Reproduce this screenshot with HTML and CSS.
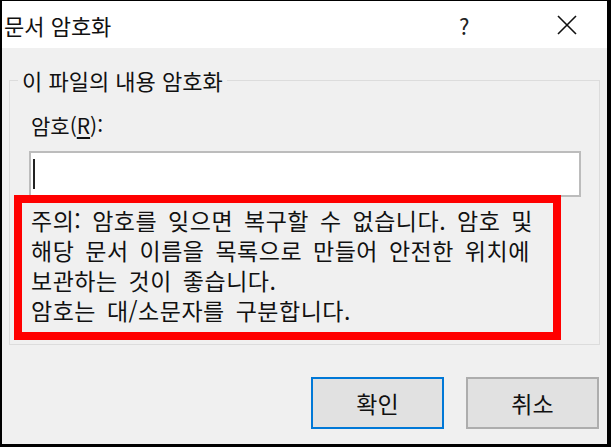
FILE: index.html
```html
<!DOCTYPE html>
<html lang="ko">
<head>
<meta charset="utf-8">
<title>문서 암호화</title>
<link rel="stylesheet" href="styles.css">
</head>
<body>
<div class="frame">
  <div class="titlebar">
    <span class="title">문서 암호화</span>
    <span class="help">?</span>
    <span class="close">
      <svg width="20" height="20" viewBox="0 0 20 20"><path d="M1 1 L19 19 M19 1 L1 19" stroke="#111" stroke-width="1.6" fill="none"/></svg>
    </span>
  </div>
  <div class="content">
    <fieldset class="group">
      <legend class="legend">이 파일의 내용 암호화</legend>
      <div class="label">암호(<u>R</u>):</div>
      <div class="input"><span class="caret"></span></div>
      <div class="note">
        <div class="line">주의: 암호를 잊으면 복구할 수 없습니다. 암호 및</div>
        <div class="line">해당 문서 이름을 목록으로 만들어 안전한 위치에</div>
        <div class="line">보관하는 것이 좋습니다.</div>
        <div class="line">암호는 대/소문자를 구분합니다.</div>
      </div>
    </fieldset>
    <div class="buttons">
      <div class="btn btn-default">확인</div>
      <div class="btn">취소</div>
    </div>
  </div>
</div>
</body>
</html>
```
FILE: styles.css
```css
html, body {
  margin: 0;
  padding: 0;
  background: #000;
}
body {
  font-family: "Noto Sans CJK KR", "Noto Sans", sans-serif;
  color: #111;
}
.frame {
  width: 611px;
  height: 447px;
  box-sizing: border-box;
  border-style: solid;
  border-color: #000;
  border-width: 1px 4px 3px 2px;
  display: flex;
  flex-direction: column;
  background: #f0f0f0;
}
.titlebar {
  height: 47px;
  background: #fff;
  display: flex;
  align-items: center;
  flex-shrink: 0;
}
.title {
  font-size: 22px;
  line-height: 26px;
  padding-left: 2px;
  flex: 1;
}
.help {
  font-size: 22px;
  line-height: 26px;
  width: 14px;
  margin-right: 84px;
  color: #222;
}
.close {
  width: 20px;
  height: 20px;
  margin-right: 30px;
  display: flex;
}
.content {
  flex: 1;
  display: flex;
  flex-direction: column;
}
.group {
  margin: 21px 7px 0 7px;
  padding: 21px 0 4px 0;
  border: 1px solid #dcdcdc;
  min-width: 0;
}
.legend {
  font-size: 22px;
  line-height: 22px;
  padding: 0 4px;
  margin-left: 8px;
}
.label {
  font-size: 21px;
  line-height: 26px;
  margin-left: 21px;
}
.label u {
  text-underline-offset: 3px;
}
.input {
  margin: 13px 0 0 19px;
  width: 552px;
  height: 46px;
  box-sizing: border-box;
  background: #fff;
  border: 2px solid #bcbcbc;
  display: flex;
  align-items: center;
  padding-left: 2px;
}
.caret {
  width: 2px;
  height: 30px;
  background: #222;
}
.note {
  margin: -2px 0 0 4px;
  width: 547px;
  height: 145px;
  box-sizing: border-box;
  border: 8px solid #ff0000;
  background: #f0f0f0;
  padding: 2px 0 0 9px;
  font-size: 23px;
  letter-spacing: 0.5px;
  word-spacing: 4px;
  white-space: nowrap;
}
.line {
  height: 30px;
  line-height: 30px;
}
.buttons {
  display: flex;
  justify-content: flex-end;
  gap: 22px;
  margin-top: 32px;
  padding-right: 8px;
}
.btn {
  width: 133px;
  height: 52px;
  box-sizing: border-box;
  background: #e1e1e1;
  border: 2px solid #adadad;
  display: flex;
  align-items: center;
  justify-content: center;
  font-size: 23px;
}
.btn-default {
  border-color: #0078d7;
}
```
